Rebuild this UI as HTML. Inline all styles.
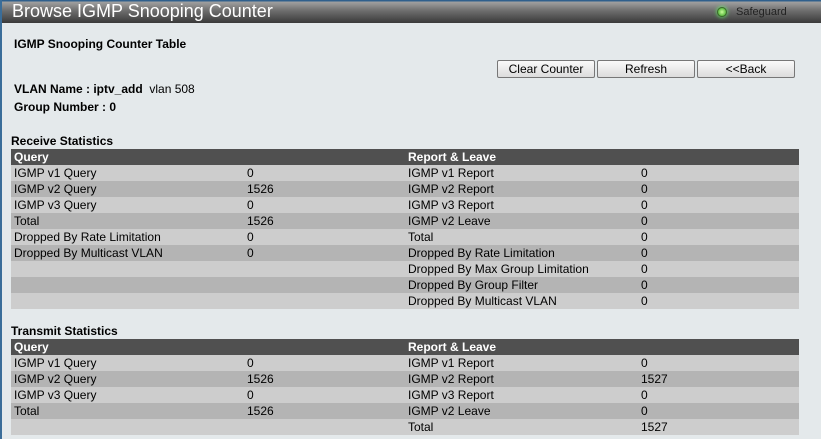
<!DOCTYPE html>
<html><head><style>
body{margin:0;width:821px;height:439px;overflow:hidden;background:#e4e9eb;font-family:"Liberation Sans",Arial,sans-serif;font-size:12px;color:#000;position:relative}
.left{position:absolute;left:0;top:0;width:2px;height:439px;background:#3a6d99}
.hdr{position:absolute;left:0;top:0;width:821px;height:23px;background:linear-gradient(#2f5f8c 0,#2f5f8c 1px,#a0a0a0 2px,#6c6c6c 11px,#3a3a3a 23px);border-left:2px solid #3a6d99;box-sizing:border-box}
.hdr .t{position:absolute;left:10px;top:1px;color:#fff;font-size:18px;line-height:21px}
.sg{position:absolute;left:717px;top:7px;width:10px;height:10px;border-radius:50%;background:radial-gradient(#c8ff9a,#2c9a1a);box-shadow:0 0 4px #6f6;border:1px solid #3a6a2a;box-sizing:border-box}
.sgt{position:absolute;left:736px;top:6px;font-size:11px;color:#222}
.b{position:absolute;font-weight:bold}
.btn{position:absolute;top:60px;border:1px solid #777;border-radius:2px;background:linear-gradient(#fafafa,#dcdcdc);font-size:12px;text-align:center;line-height:17px;box-sizing:border-box;height:18px}
table{position:absolute;left:11px;width:788px;border-collapse:collapse}
td{height:16px;padding:0 0 0 3px;line-height:16px;white-space:nowrap;font-size:12px}
tr.h td{background:#505050;color:#fff;font-weight:bold}
tr.l td{background:#cdcdcd}
tr.d td{background:#b4b4b4}
</style></head><body>
<div class="hdr"><div class="t">Browse IGMP Snooping Counter</div></div>
<div class="left"></div>
<div class="sg"></div><div class="sgt">Safeguard</div>
<div class="b" style="left:14px;top:37px">IGMP Snooping Counter Table</div>
<div class="b" style="left:14px;top:82px">VLAN Name : iptv_add <span style="font-weight:normal">&nbsp;vlan 508</span></div>
<div class="b" style="left:14px;top:100px">Group Number : 0</div>
<div class="btn" style="left:497px;width:98px">Clear Counter</div>
<div class="btn" style="left:597px;width:98px">Refresh</div>
<div class="btn" style="left:697px;width:98px">&lt;&lt;Back</div>
<div class="b" style="left:11px;top:134px">Receive Statistics</div>
<table style="top:149px">
<colgroup><col style="width:233px"><col style="width:161px"><col style="width:233px"><col></colgroup>
<tr class="h"><td>Query</td><td></td><td>Report &amp; Leave</td><td></td></tr>
<tr class="l"><td>IGMP v1 Query</td><td>0</td><td>IGMP v1 Report</td><td>0</td></tr>
<tr class="d"><td>IGMP v2 Query</td><td>1526</td><td>IGMP v2 Report</td><td>0</td></tr>
<tr class="l"><td>IGMP v3 Query</td><td>0</td><td>IGMP v3 Report</td><td>0</td></tr>
<tr class="d"><td>Total</td><td>1526</td><td>IGMP v2 Leave</td><td>0</td></tr>
<tr class="l"><td>Dropped By Rate Limitation</td><td>0</td><td>Total</td><td>0</td></tr>
<tr class="d"><td>Dropped By Multicast VLAN</td><td>0</td><td>Dropped By Rate Limitation</td><td>0</td></tr>
<tr class="l"><td></td><td></td><td>Dropped By Max Group Limitation</td><td>0</td></tr>
<tr class="d"><td></td><td></td><td>Dropped By Group Filter</td><td>0</td></tr>
<tr class="l"><td></td><td></td><td>Dropped By Multicast VLAN</td><td>0</td></tr>
</table>
<div class="b" style="left:11px;top:324px">Transmit Statistics</div>
<table style="top:339px">
<colgroup><col style="width:233px"><col style="width:161px"><col style="width:233px"><col></colgroup>
<tr class="h"><td>Query</td><td></td><td>Report &amp; Leave</td><td></td></tr>
<tr class="l"><td>IGMP v1 Query</td><td>0</td><td>IGMP v1 Report</td><td>0</td></tr>
<tr class="d"><td>IGMP v2 Query</td><td>1526</td><td>IGMP v2 Report</td><td>1527</td></tr>
<tr class="l"><td>IGMP v3 Query</td><td>0</td><td>IGMP v3 Report</td><td>0</td></tr>
<tr class="d"><td>Total</td><td>1526</td><td>IGMP v2 Leave</td><td>0</td></tr>
<tr class="l"><td></td><td></td><td>Total</td><td>1527</td></tr>
</table>
</body></html>
